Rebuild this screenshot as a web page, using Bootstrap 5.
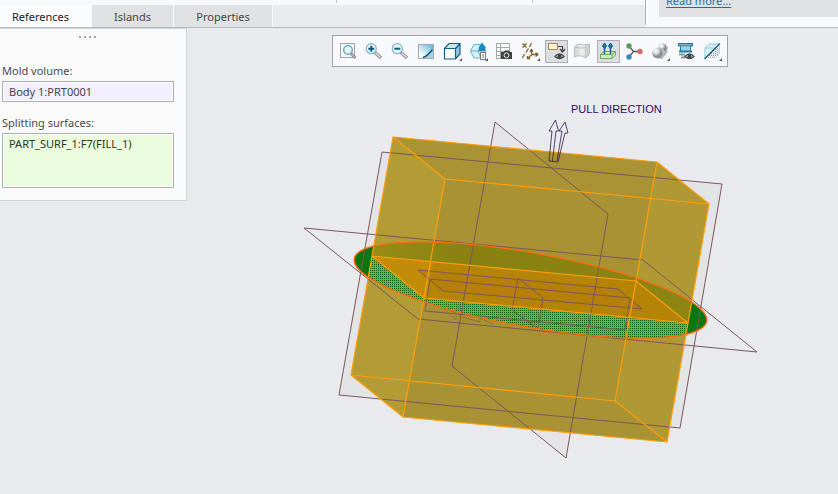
<!DOCTYPE html>
<html lang="en">
<head>
<meta charset="utf-8">
<meta name="viewport" content="width=device-width, initial-scale=1">
<title>Mold volume – References</title>
<link href="https://cdn.jsdelivr.net/npm/bootstrap@5.3.0/dist/css/bootstrap.min.css" rel="stylesheet">
<style>
  body { background: #e9eaee; color: #3c3c3c; font-family: "Noto Sans", "Open Sans", sans-serif; font-size: 11px; line-height: 16px; }
  .ribbon { background: #f8f9fc; border-bottom: 1px solid #b3bbc1; height: 28px; }
  .groups { height: 5px; }
  .groups > span { height: 3px; border-right: 1px solid #bfc1c4; }
  .group-a { width: 337px; }
  .group-b { width: 196px; }
  .tab-strip { background: #e9eaec; gap: 1px; }
  .tab-strip .tab { border: 0; border-radius: 0; background: #e0e1e3; color: #444; padding: 4px 0 2px; line-height: 16px; text-align: center; box-shadow: 1px 0 #f8f9fc; }
  .tab-strip .tab.active { background: #fbfcfd; color: #222; padding-right: 10px; }
  .tab-refs { width: 91px; } .tab-isl { width: 81px; } .tab-prop { width: 98px; }
  .notice { flex: 0 0 193px; margin-bottom: 2px; border-left: 1px solid #aeb0b3; padding-left: 13px; }
  .notice-box { background: #e0e1e3; height: 17px; padding-left: 7px; overflow: hidden; }
  .notice-box a { color: #1a6fab; margin-top: -7px; text-underline-offset: 2px; }
  .stage { overflow: hidden; }
  .model { top: 0; left: 0; z-index: 0; }
  .refs-panel { flex: 0 0 187px; background: #fafafb; border: 1px solid #cfd3d7; border-left: 0; padding: 7px 12px 12px 2px; z-index: 1; }
  .grip { display: block; width: 18px; height: 2px; margin: 0 auto 25px 77px; background: repeating-linear-gradient(90deg, #a5a5a5 0 2px, transparent 2px 5px); }
  .refs-panel label { line-height: 16px; margin-bottom: 2px; display: block; color: #4a4a4a; }
  .field { display: block; width: 100%; border: 1px solid #adafb3; border-radius: 0; padding: 1px 6px; font-size: 11px; line-height: 17px; box-shadow: inset 0 0 0 1px #fff; resize: none; outline: 0; }
  .field-volume { background: #f3effe; color: #444; height: 21px; margin-bottom: 13px; }
  .field-surfaces { background: #ebfbdd; color: #2b3328; height: 55px; }
  .view-tools { margin: 7px 110px 0 auto; background: #f8f9fc; border: 1px solid #a0a3a8; padding: 4px 3px 3px 4px; gap: 3px; z-index: 1; }
  .tool { width: 23px; height: 23px; padding: 0; border: 0; background: transparent; display: block; }
  .tool svg { display: block; margin-left: -1px; }
  .tool.pressed { background: #dcdee1; box-shadow: inset 0 0 0 1px #aaadb2; }
  .pull { font-family: "Liberation Sans", Arial, sans-serif; font-size: 11px; fill: #2e0b68; }
</style>
<script src="https://cdn.jsdelivr.net/npm/bootstrap@5.3.0/dist/js/bootstrap.bundle.min.js"></script>
</head>
<body class="d-flex flex-column min-vh-100">

<header class="ribbon d-flex">
  <div class="flex-grow-1 d-flex flex-column">
    <div class="groups d-flex"><span class="group-a"></span><span class="group-b"></span></div>
    <div class="tab-strip d-flex flex-grow-1" role="tablist">
      <button class="tab tab-refs active" type="button" role="tab" aria-selected="true">References</button>
      <button class="tab tab-isl" type="button" role="tab" aria-selected="false">Islands</button>
      <button class="tab tab-prop" type="button" role="tab" aria-selected="false">Properties</button>
    </div>
  </div>
  <div class="notice"><div class="notice-box d-flex align-items-start"><a href="#">Read more...</a></div></div>
</header>

<main class="stage position-relative flex-grow-1 d-flex align-items-start">

  <svg class="model position-absolute w-100 h-100" viewBox="0 28 838 466" role="img" aria-label="Mold volume model">
    <defs>
      <pattern id="mesh" width="2" height="2" patternUnits="userSpaceOnUse">
        <rect width="2" height="2" fill="#9b9c45"/><rect width="1" height="1" fill="#08600c"/>
      </pattern>
      <clipPath id="boxClip"><path d="M393 137L657 162L709 204L667 442L403 417L351 375Z"/></clipPath>
      <clipPath id="discClip"><ellipse cx="530.5" cy="290" rx="179" ry="37" transform="rotate(10.1 530.5 290)"/></clipPath>
      <linearGradient id="olive"><stop offset="0" stop-color="#979018"/><stop offset=".35" stop-color="#888010"/><stop offset="1" stop-color="#8d8613"/></linearGradient>
    </defs>
    <g fill="#dededf" fill-opacity=".55">
      <path d="M382 152L722 184L680 428L339 395Z"/>
      <path fill-opacity=".4" d="M495 122L608 214L566 458L452 366Z"/>
    </g>
    <ellipse cx="530.5" cy="290" rx="179" ry="37" transform="rotate(10.1 530.5 290)" fill="#0e760e"/>
    <path fill="#b39c35" d="M393 137L657 162L709 204L667 442L403 417L351 375Z"/>
    <path fill="#a99335" d="M393 137L657 162L709 204L445 179Z"/>
    <path fill="#a99234" d="M445 179L657 199L615 401L667 442L403 417Z"/>
    <path fill="#b09934" d="M657 162L709 204L667 442L615 401Z"/>
    <g clip-path="url(#boxClip)"><g clip-path="url(#discClip)">
      <rect x="350" y="235" width="360" height="110" fill="url(#olive)"/>
      <path fill="url(#mesh)" shape-rendering="crispEdges" d="M372 256L424 298L688 323L686 345H350V256Z"/>
      <path fill="#b58407" d="M372 256L636 281L688 323L424 298Z"/>
      <path fill="#c28c08" d="M372 256L433 262L427 298H424Z"/>
    </g></g>
    <path d="M418 270L618 289L642 309L443 291Z" fill="#b77b0e" fill-opacity=".6"/>
    <g fill="none" stroke="#7a575c" stroke-width="1">
      <path d="M382 152L722 184L680 428L339 395ZM495 122L608 214L566 458L452 366ZM304 228L643 260L757 352L418 319Z"/>
      <path d="M418 270L618 289L642 309L443 291ZM430 279L630 298L625 330L425 311ZM518 278L543 298L538 329L512 310Z"/>
    </g>
    <path d="M442 307L456 313V320M442 307L456 320M459 316L480 322V317M480 318L493 324" fill="none" stroke="#92732e"/>
    <g fill="none" stroke="#ff9d0a" stroke-width="1.2" stroke-linejoin="round">
      <path d="M393 137L657 162L709 204L445 179ZM351 375L615 401L667 442L403 417ZM372 256L636 281L688 323L424 298ZM393 137L351 375M657 162L615 401M709 204L667 442M445 179L403 417"/>
    </g>
    <ellipse cx="530.5" cy="290" rx="179" ry="37" transform="rotate(10.1 530.5 290)" fill="none" stroke="#ff6a0d" stroke-width="1.2"/>
    <g fill="none" stroke="#2e1648" stroke-width=".8">
      <path d="M549 161L552 131H549L555.500 120L558.500 131H556L552.500 161"/>
      <path d="M549 161L558 162L565 133H568L565 122L559 131H562L557 161"/>
    </g>
    <text class="pull" x="571" y="113">PULL DIRECTION</text>
  </svg>

  <form class="refs-panel">
    <span class="grip"></span>
    <label for="volume">Mold volume:</label>
    <input class="field field-volume" id="volume" type="text" value="Body 1:PRT0001">
    <label for="surfaces">Splitting surfaces:</label>
    <textarea class="field field-surfaces" id="surfaces" spellcheck="false">PART_SURF_1:F7(FILL_1)</textarea>
  </form>

  <div class="view-tools d-flex" role="toolbar" aria-label="Graphics toolbar">
    <svg width="0" height="0" class="position-absolute" aria-hidden="true"><defs>
      <linearGradient id="blueFade" x1="1" y1="0" x2="0" y2="1"><stop offset="0" stop-color="#55b2d8"/><stop offset=".8" stop-color="#fff"/></linearGradient>
      <radialGradient id="ball" cx=".35" cy=".3"><stop offset="0" stop-color="#fff"/><stop offset=".6" stop-color="#d2d3d5"/><stop offset="1" stop-color="#8d8d8f"/></radialGradient>
      <linearGradient id="greySheet"><stop offset="0" stop-color="#d0d2d4"/><stop offset=".5" stop-color="#f0f0f0"/><stop offset="1" stop-color="#c9cbcd"/></linearGradient>
      <path id="more" d="M22 18V21H19Z" fill="#555"/>
      <g id="eye"><path d="M11 16.500Q15.500 11.500 20 16.500Q15.500 20.500 11 16.500Z" fill="#fff" stroke="#3e454a" stroke-width="1.300"/><circle cx="15.500" cy="16.300" r="2" fill="#3e454a"/></g>
      <g id="lens"><path d="M12.500 12L19 18" stroke="#8d8f91" stroke-width="3.400"/><path d="M13.500 12.800L18.500 17.500" stroke="#dddedf" stroke-width="1.600"/><circle cx="9.300" cy="8.700" r="5" fill="#e9f7fc" stroke="#86b3c6" stroke-width="1.200"/></g>
    </defs></svg>
    <button class="tool" type="button" aria-label="Refit"><svg width="24" height="23"><rect x="4.500" y="3.500" width="14" height="14" fill="#f7f7f7" stroke="#a2a4a6"/><path d="M14.500 13L19.500 18" stroke="#909294" stroke-width="3"/><path d="M15.500 14L19 17.500" stroke="#d6d7d8"/><circle cx="12" cy="10" r="4.300" fill="#e4f4fa" stroke="#5b9fbc" stroke-width="1.300"/></svg></button>
    <button class="tool" type="button" aria-label="Zoom in"><svg width="24" height="23"><use href="#lens"/><path d="M6.300 8.700H12.300M9.300 5.700V11.700" stroke="#075c86" stroke-width="2"/></svg></button>
    <button class="tool" type="button" aria-label="Zoom out"><svg width="24" height="23"><use href="#lens"/><path d="M6.300 8.700H12.300" stroke="#075c86" stroke-width="2"/></svg></button>
    <button class="tool" type="button" aria-label="Repaint"><svg width="24" height="23"><rect x="4.500" y="4.500" width="15" height="14" fill="url(#blueFade)" stroke="#a5a8aa"/><path d="M9 18Q14 17 19 9V18Z" fill="#a3d3e6"/><path d="M9 17.500Q13 16.500 18.500 9.500" fill="none" stroke="#184f6b" stroke-width="1.500"/></svg></button>
    <button class="tool" type="button" aria-label="Display style"><svg width="24" height="23"><path d="M4.500 8.500L9 3.500H20L15.500 8.500Z" fill="#c4e7f5"/><path d="M15.500 8.500L20 3.500V14L15.500 19Z" fill="#8dc5dd"/><path d="M4.500 8.500H15.500V19H4.500Z" fill="#fff"/><path d="M4.500 8.500L9 3.500H20V14L15.500 19H4.500V8.500H15.500V19M15.500 8.500L20 3.500" fill="none" stroke="#155f80" stroke-width="1.200"/><use href="#more"/></svg></button>
    <button class="tool" type="button" aria-label="Saved orientations"><svg width="24" height="23"><path d="M4.500 11L8 4.500H15L19.500 11L16 18H8Z" fill="#d5eff9" stroke="#6db0cc"/><path d="M4.500 11H19M15 4.500L12 11L15 18" fill="none" stroke="#6db0cc"/><path d="M16 2.500L19.500 7V11H13V7Z" fill="#168cbc"/><rect x="14.500" y="12.500" width="5" height="7" fill="#fff" stroke="#777"/><path d="M16 15H18M16 17H18" stroke="#777"/><use href="#more"/></svg></button>
    <button class="tool" type="button" aria-label="View manager"><svg width="24" height="23"><path d="M4.500 3.500H17.500V18.500H4.500ZM4.500 7.500H17.500M4.500 11.500H17.500M4.500 15.500H17.500M8.500 3.500V18.500" fill="#fff" stroke="#a3a5a8"/><path d="M9 12H12L13 10.500H17L18 12H20V19H9Z" fill="#3f4347"/><circle cx="14.500" cy="15.300" r="2.400" fill="#3f4347" stroke="#e8e8e8"/></svg></button>
    <button class="tool" type="button" aria-label="Datum display filters"><svg width="24" height="23"><path d="M4.500 3.500L8.500 7.500M8.500 3.500L4.500 7.500M13.500 3L11.500 7M10.500 8.500L8 12.500M6.500 14L4.500 18M13.500 10V15L9.500 18.500M13.500 14.500H20M17.500 12.500L20 14.500L17.500 16.500M12 11.500L13.500 9.500L15 11.500M9.500 16V18.500H12" fill="none" stroke="#80602a" stroke-width="1.300"/><use href="#more"/></svg></button>
    <button class="tool pressed" type="button" aria-label="Annotation display" aria-pressed="true"><svg width="24" height="23"><rect x="4.500" y="3.500" width="9" height="6" fill="#fff2d2" stroke="#a68654"/><path d="M14 6.500H18.500V11M16 9L18.500 12L21 9" fill="none" stroke="#3e454a" stroke-width="1.200"/><use href="#eye"/></svg></button>
    <button class="tool" type="button" aria-label="Surface display"><svg width="24" height="23"><path d="M4.500 7L8 4Q13 6 19.500 4V14L16 18Q10 14 4.500 17Z" fill="url(#greySheet)" stroke="#b9bbbd"/><path d="M4.500 7Q10 9 16 7.500L19.500 4M16 7.500V17" fill="none" stroke="#b9bbbd"/></svg></button>
    <button class="tool pressed" type="button" aria-label="Pull direction display" aria-pressed="true"><svg width="24" height="23"><path d="M4.500 14.500L8 11.500H19.500V15L16 18.500H4.500Z" fill="#c8f5b5" stroke="#69a55a"/><path d="M4.500 14.500H16L19.500 11.500M16 14.500V18" fill="none" stroke="#69a55a"/><path d="M8.500 14V6M14.500 14V6" stroke="#075c86" stroke-width="1.300"/><path d="M8.500 3L10.500 6L8.500 9L6.500 6ZM14.500 3L16.500 6L14.500 9L12.500 6Z" fill="#1580ad" stroke="#075c86"/></svg></button>
    <button class="tool" type="button" aria-label="Spin center"><svg width="24" height="23"><path d="M7 6L11.500 11.500L7 17M11.500 11.500H17" fill="none" stroke="#48565a" stroke-width="1.300"/><circle cx="7" cy="6" r="2.700" fill="#5d9c62"/><circle cx="7" cy="17" r="2.700" fill="#3b87b8"/><circle cx="18" cy="11.500" r="2.700" fill="#d86b68"/></svg></button>
    <button class="tool" type="button" aria-label="Rendering"><svg width="24" height="23"><path d="M8 18L14 19L19 13L20 6L14 10Z" fill="#777" opacity=".55"/><circle cx="14.500" cy="7.500" r="4.200" fill="url(#ball)"/><path d="M8 8H14L17 12L13 18Z" fill="#c5c6c8"/><circle cx="9.500" cy="13" r="5.300" fill="url(#ball)"/><use href="#more"/></svg></button>
    <button class="tool" type="button" aria-label="Layer visibility"><svg width="24" height="23"><rect x="4.500" y="3.500" width="14" height="2.500" fill="#6fb6d2" stroke="#26779a"/><path d="M6.500 6V11M16.500 6V11" stroke="#26779a"/><rect x="7" y="7" width="9" height="4" fill="#9ed2e6"/><path d="M5 11.500H18" stroke="#1580ad" stroke-width="2"/><path d="M5 14.500H11M7 17.500H11" stroke="#929497" stroke-width="2"/><use href="#eye"/></svg></button>
    <button class="tool" type="button" aria-label="Section"><svg width="24" height="23"><path d="M5 8L9 4H19L5 18Z" fill="#dff3fa" stroke="#8fc6da"/><path d="M5 8H15.500" stroke="#8fc6da"/><path d="M8 17H15L19 13V6L15 10Z" fill="#e6e7e9"/><path d="M8 17.500H15.500L19.500 13.500V6M15.500 9V17M9 15.500H15M11 13.500H15M17.500 8V15" fill="none" stroke="#989b9e" stroke-dasharray="1 1"/><path d="M4.500 19L20 3.500" stroke="#155f80" stroke-width="1.400"/><use href="#more"/></svg></button>
  </div>
</main>
</body>
</html>
